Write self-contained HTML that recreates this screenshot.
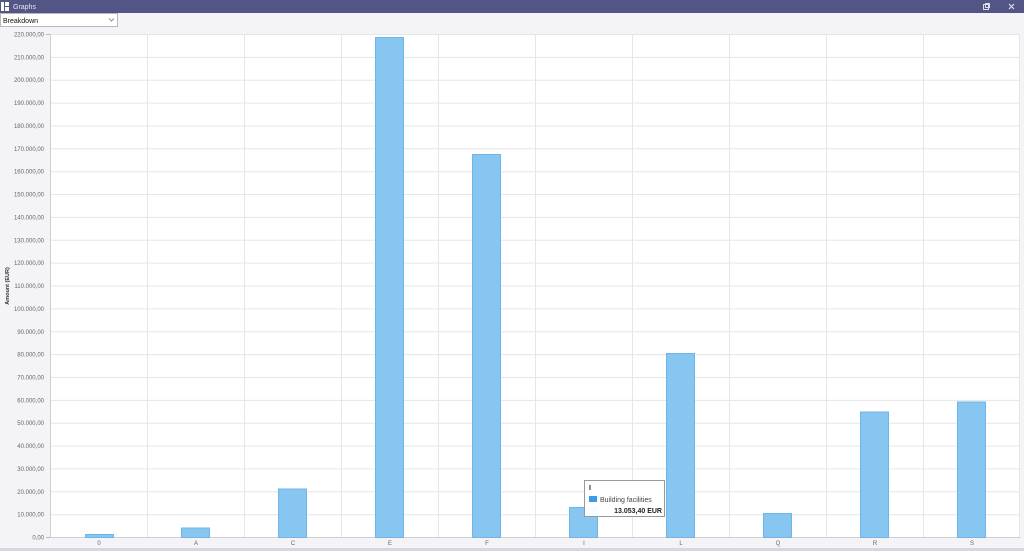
<!DOCTYPE html>
<html><head><style>
body{margin:0;width:1024px;height:551px;overflow:hidden;background:#f4f4f8;font-family:"Liberation Sans",sans-serif}
</style></head><body>
<svg width="1024" height="551" xmlns="http://www.w3.org/2000/svg" style="position:absolute;left:0;top:0" font-family="Liberation Sans, sans-serif">
<rect x="0" y="0" width="1024" height="13" fill="#545587"/>
<rect x="1" y="2" width="3" height="9" fill="#fff"/><rect x="5" y="2" width="4" height="4" fill="#fff"/><rect x="5" y="7" width="4" height="4" fill="#fff"/>
<text x="13" y="9" font-size="7" fill="#e8e8f4">Graphs</text>
<rect x="983.5" y="4.5" width="5" height="5" fill="none" stroke="#dcdcec"/><rect x="985.5" y="3.5" width="4" height="4" fill="none" stroke="#dcdcec"/>
<path d="M1009 4l5 5M1014 4l-5 5" stroke="#dcdcec" stroke-width="1.2"/>
<rect x="0.5" y="13.5" width="117" height="13" fill="#fff" stroke="#b8b8b8"/>
<text x="3" y="23" font-size="7" fill="#111">Breakdown</text>
<path d="M109 18.5l2.5 2.5 2.5-2.5" fill="none" stroke="#777" stroke-width="0.8"/>
<rect x="50" y="34" width="970" height="503" fill="#fff"/>
<g stroke="#e6e6e6" stroke-width="1">
<path d="M50 34.5H1020M50 57.4H1020M50 80.2H1020M50 103.1H1020M50 126H1020M50 148.8H1020M50 171.7H1020M50 194.5H1020M50 217.4H1020M50 240.3H1020M50 263.1H1020M50 286H1020M50 308.9H1020M50 331.8H1020M50 354.6H1020M50 377.5H1020M50 400.4H1020M50 423.2H1020M50 446.1H1020M50 468.9H1020M50 491.8H1020M50 514.7H1020"/>
<path d="M147.5 34V537M244.5 34V537M341.5 34V537M438.5 34V537M535.5 34V537M632.5 34V537M729.5 34V537M826.5 34V537M923.5 34V537M1019.5 34V537"/>
</g>
<path d="M50 537.5H1020M50.5 34V537" stroke="#cfcfcf"/>
<g fill="#87c6f1" stroke="#6cb6ea" stroke-width="1">
<rect x="85.5" y="534.5" width="28" height="3"/>
<rect x="181.5" y="528" width="28" height="9.5"/>
<rect x="278.5" y="489" width="28" height="48.5"/>
<rect x="375.5" y="37.5" width="28" height="500"/>
<rect x="472.5" y="154.5" width="28" height="383"/>
<rect x="569.5" y="507.5" width="28" height="30"/>
<rect x="666.5" y="353.5" width="28" height="184"/>
<rect x="763.5" y="513.5" width="28" height="24"/>
<rect x="860.5" y="412" width="28" height="125.5"/>
<rect x="957.5" y="402" width="28" height="135.5"/>
</g>
<g font-size="6" fill="#666" text-anchor="end">
<text x="44" y="36.5">220.000,00</text><text x="44" y="59.4">210.000,00</text><text x="44" y="82.2">200.000,00</text><text x="44" y="105.1">190.000,00</text><text x="44" y="128">180.000,00</text><text x="44" y="150.8">170.000,00</text><text x="44" y="173.7">160.000,00</text><text x="44" y="196.5">150.000,00</text><text x="44" y="219.4">140.000,00</text><text x="44" y="242.3">130.000,00</text><text x="44" y="265.1">120.000,00</text><text x="44" y="288">110.000,00</text><text x="44" y="310.9">100.000,00</text><text x="44" y="333.8">90.000,00</text><text x="44" y="356.6">80.000,00</text><text x="44" y="379.5">70.000,00</text><text x="44" y="402.4">60.000,00</text><text x="44" y="425.2">50.000,00</text><text x="44" y="448.1">40.000,00</text><text x="44" y="470.9">30.000,00</text><text x="44" y="493.8">20.000,00</text><text x="44" y="516.7">10.000,00</text><text x="44" y="539.5">0,00</text>
</g>
<g stroke="#bbb"><path d="M46 34.5H50M46 537.5H50"/></g>
<text transform="translate(9,286) rotate(-90)" font-size="5.5" font-weight="bold" fill="#333" text-anchor="middle">Amount (EUR)</text>
<g font-size="6" fill="#666" text-anchor="middle">
<text x="99" y="545">0</text><text x="196" y="545">A</text><text x="293" y="545">C</text><text x="390" y="545">E</text><text x="487" y="545">F</text><text x="584" y="545">I</text><text x="681" y="545">L</text><text x="778" y="545">Q</text><text x="875" y="545">R</text><text x="972" y="545">S</text>
</g>
<rect x="0" y="548" width="1024" height="3" fill="#d8d8dc"/>
<rect x="584.5" y="480.5" width="80" height="36" fill="#fff" fill-opacity="0.95" stroke="#999"/>
<text x="589" y="490" font-size="7" font-weight="bold" fill="#222">I</text>
<rect x="589" y="496" width="8" height="6" fill="#3a9be6"/>
<text x="600" y="502" font-size="7" fill="#444">Building facilities</text>
<text x="662" y="513" font-size="7" font-weight="bold" fill="#222" text-anchor="end">13.053,40 EUR</text>
</svg>
</body></html>
